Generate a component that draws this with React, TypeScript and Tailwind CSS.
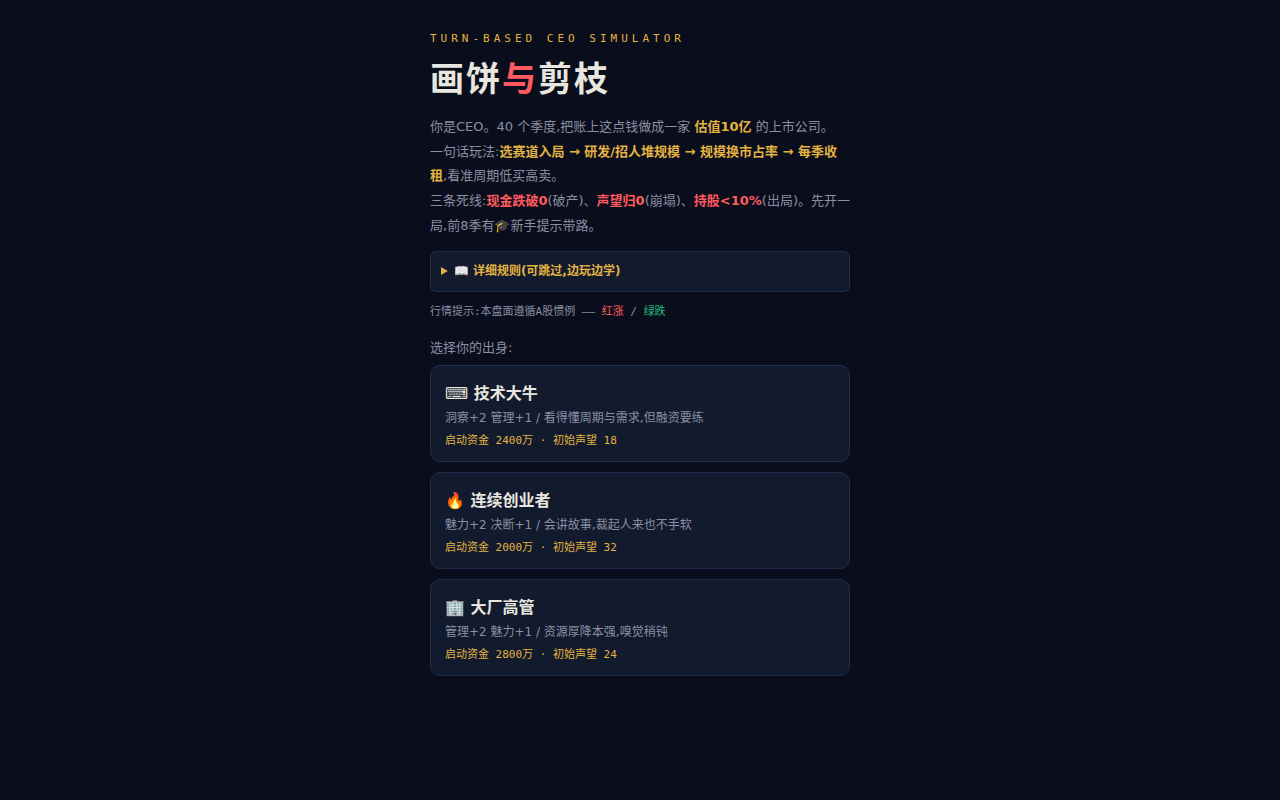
import type { ReactNode } from "react";

const Gold = ({ children }: { children: ReactNode }) => (
  <b className="font-bold text-[#e3b341]">{children}</b>
);
const Red = ({ children }: { children: ReactNode }) => (
  <b className="font-bold text-[#ff5a5f]">{children}</b>
);

const origins = [
  { icon: "⌨", name: "技术大牛", desc: "洞察+2 管理+1 / 看得懂周期与需求,但融资要练", stats: "启动资金 2400万 · 初始声望 18" },
  { icon: "🔥", name: "连续创业者", desc: "魅力+2 决断+1 / 会讲故事,裁起人来也不手软", stats: "启动资金 2000万 · 初始声望 32" },
  { icon: "🏢", name: "大厂高管", desc: "管理+2 魅力+1 / 资源厚降本强,嗅觉稍钝", stats: "启动资金 2800万 · 初始声望 24" },
];

export default function App() {
  return (
    <div className="min-h-screen bg-[#0a0e1c] px-4 pt-[29px] pb-10 font-['DejaVu_Sans','Noto_Sans_CJK_SC',sans-serif] text-[#e8e6df]">
      <main className="mx-auto max-w-[420px]">
        <p className="font-['DejaVu_Sans_Mono','Noto_Sans_CJK_SC',monospace] text-[11px] leading-5 tracking-[4px] text-[#e3b341]">
          TURN-BASED CEO SIMULATOR
        </p>
        <h1 className="mt-2 text-[34px] leading-[45px] font-bold tracking-[2px]">
          画饼<span className="text-[#ff5a5f]">与</span>剪枝
        </h1>
        <p className="mt-[13px] text-[13px] leading-[1.9] text-[#8a8fa3]">
          你是CEO。40 个季度,把账上这点钱做成一家 <Gold>估值10亿</Gold> 的上市公司。
          <br />
          一句话玩法:<Gold>选赛道入局 → 研发/招人堆规模 → 规模换市占率 → 每季收租</Gold>,看准周期低买高卖。
          <br />
          三条死线:<Red>现金跌破0</Red>(破产)、<Red>声望归0</Red>(崩塌)、<Red>持股&lt;10%</Red>(出局)。先开一局,前8季有🎓新手提示带路。
        </p>
        <details className="mt-[13px] rounded-md border border-[#1f2c4e] bg-[#121a2e] px-2.5 py-2 text-[12px] leading-[23px]">
          <summary className="cursor-pointer font-bold text-[#e3b341]">📖 详细规则(可跳过,边玩边学)</summary>
        </details>
        <p className="mt-2.5 font-['DejaVu_Sans_Mono','Noto_Sans_CJK_SC',monospace] text-[11px] leading-5 text-[#8a8fa3]">
          行情提示:本盘面遵循A股惯例 —— <span className="text-[#ff5a5f]">红涨</span> / <span className="text-[#26b47f]">绿跌</span>
        </p>
        <h2 className="mt-4 text-[13px] leading-5 text-[#8a8fa3]">选择你的出身:</h2>
        <div className="mt-[7px] flex flex-col gap-2.5">
          {origins.map((o) => (
            <button key={o.name} type="button" className="block w-full cursor-pointer rounded-[10px] border border-[#1f2c4e] bg-[#121a2e] px-3.5 pt-4 pb-[9px] text-left">
              <span className="block text-[16px] leading-6 font-bold">{o.icon} {o.name}</span>
              <span className="block text-[12px] leading-6 text-[#8a8fa3]">{o.desc}</span>
              <span className="block font-['DejaVu_Sans_Mono','Noto_Sans_CJK_SC',monospace] text-[11px] leading-[22px] text-[#e3b341]">{o.stats}</span>
            </button>
          ))}
        </div>
      </main>
    </div>
  );
}
